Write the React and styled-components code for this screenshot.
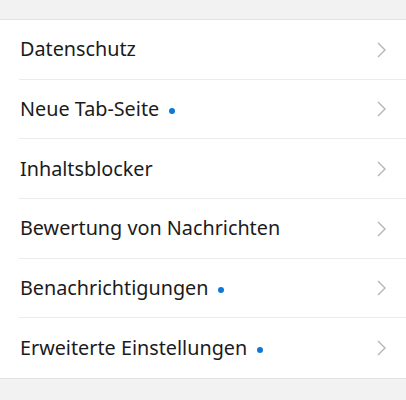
import React from "react";
import styled, { createGlobalStyle } from "styled-components";

const Global = createGlobalStyle`
  html, body { margin: 0; padding: 0; background: #f2f2f2; }
  body { font-family: "Noto Sans", "Open Sans", sans-serif; }
`;

const Page = styled.div`
  width: 406px;
  height: 400px;
  background: #f2f2f2;
  padding-top: 19px;
  box-sizing: border-box;
`;

const List = styled.ul`
  list-style: none;
  margin: 0;
  padding: 0;
  background: #ffffff;
  border-top: 1px solid #e3e3e3;
  border-bottom: 1px solid #e3e3e3;
`;

const Row = styled.li`
  position: relative;
  height: 59.67px;
  box-sizing: border-box;
  display: flex;
  align-items: center;
  padding: 0 18px 0 20px;
  &:not(:last-child)::after {
    content: "";
    position: absolute;
    left: 19px;
    right: 0;
    bottom: 0;
    height: 1px;
    background: #ebebeb;
  }
`;

const Label = styled.span`
  flex: 1;
  display: flex;
  align-items: center;
  gap: 10px;
  font-size: 19.8px;
  color: #1b1b1b;
  margin-top: -2px;
`;

const Dot = styled.span`
  width: 6px;
  height: 6px;
  border-radius: 50%;
  background: #0f78d4;
  margin-top: 5px;
`;

const Chevron = () => (
  <svg width="12" height="16" viewBox="0 0 12 16" fill="none">
    <path d="M2 1 L9 8 L2 15" stroke="#b5b5b5" strokeWidth="1.4" />
  </svg>
);

const items = [
  { label: "Datenschutz" },
  { label: "Neue Tab-Seite", dot: true },
  { label: "Inhaltsblocker" },
  { label: "Bewertung von Nachrichten" },
  { label: "Benachrichtigungen", dot: true },
  { label: "Erweiterte Einstellungen", dot: true },
];

export default function App() {
  return (
    <>
      <Global />
      <Page>
        <List>
          {items.map((it) => (
            <Row key={it.label}>
              <Label>
                {it.label}
                {it.dot && <Dot />}
              </Label>
              <Chevron />
            </Row>
          ))}
        </List>
      </Page>
    </>
  );
}
